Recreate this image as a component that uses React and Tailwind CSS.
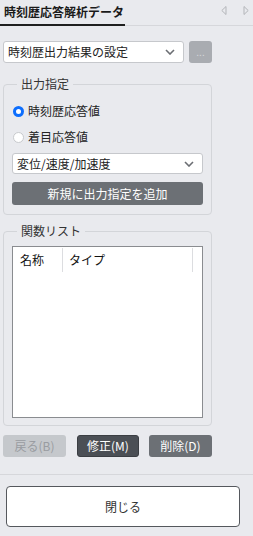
import { FiChevronDown } from 'react-icons/fi';

const font = { fontFamily: '"Noto Sans CJK JP", "Noto Sans", sans-serif' };

function Chevron() {
  return (
    <svg width="10" height="6" viewBox="0 0 10 6" className="text-[#6b6e73]">
      <path d="M1 1l4 4 4-4" fill="none" stroke="currentColor" strokeWidth="1.6" />
    </svg>
  );
}

function Select({ value, className }) {
  return (
    <div className={`flex items-center justify-between bg-white border border-[#c6c8cc] rounded-[3px] pl-[4px] pr-[8px] text-[12px] text-[#222] ${className}`}>
      <span className="leading-none">{value}</span>
      <Chevron />
    </div>
  );
}

function Radio({ checked, label }) {
  return (
    <div className="flex items-center h-[20px]">
      {checked ? (
        <span className="w-[11px] h-[11px] rounded-full bg-[#0d6efd] flex items-center justify-center ml-[1px]">
          <span className="w-[5px] h-[5px] rounded-full bg-white" />
        </span>
      ) : (
        <span className="w-[11px] h-[11px] rounded-full bg-white border border-[#c8cacd] ml-[1px]" />
      )}
      <span className="ml-[4px] text-[12px] text-[#222] leading-none">{label}</span>
    </div>
  );
}

export default function App() {
  return (
    <div className="w-[253px] h-[536px] bg-[#e9eaee] flex flex-col" style={font}>
      {/* Tab header */}
      <div className="flex items-start h-[26px] border-b border-[#d6d7db]">
        <div className="w-[125px] h-[26px] -mb-px border-b-[2px] border-[#1f1f1f] pl-[4px] pt-[5px] text-[12px] font-bold text-[#1a1a1a] leading-[14px]">
          時刻歴応答解析データ
        </div>
        <div className="flex-1" />
        <div className="flex items-center gap-[16px] pt-[6px] pr-[4px]">
          <svg width="6" height="9" viewBox="0 0 6 9">
            <path d="M5 0.5L0.8 4.5 5 8.5z" fill="none" stroke="#b3b5b9" strokeWidth="1" />
          </svg>
          <svg width="6" height="9" viewBox="0 0 6 9">
            <path d="M1 0.5L5.2 4.5 1 8.5z" fill="none" stroke="#b3b5b9" strokeWidth="1" />
          </svg>
        </div>
      </div>

      <div className="w-[212px] pl-[3px]">
        {/* Setting select */}
        <div className="flex items-center mt-[15px]">
          <Select value="時刻歴出力結果の設定" className="w-[181px] h-[22px]" />
          <div className="ml-[5px] w-[23px] h-[22px] rounded-[3px] bg-[#a9acb1] flex items-center justify-center text-[10px] text-[#d4d6d9] leading-none">
            ...
          </div>
        </div>

        {/* 出力指定 */}
        <fieldset className="mt-[14px] border border-[#d3d5d9] rounded-[4px] px-[8px] pb-[9px]">
          <legend className="ml-[5px] px-[4px] text-[12px] leading-[14px] text-[#333]">出力指定</legend>
          <div className="mt-[10px] flex flex-col gap-[6px]">
            <Radio checked label="時刻歴応答値" />
            <Radio label="着目応答値" />
          </div>
          <Select value="変位/速度/加速度" className="mt-[6px] h-[21px]" />
          <div className="mt-[8px] h-[23px] rounded-[3px] bg-[#6c7075] flex items-center justify-center text-[12px] text-white leading-none">
            新規に出力指定を追加
          </div>
        </fieldset>

        {/* 関数リスト */}
        <fieldset className="mt-[9px] border border-[#d3d5d9] rounded-[4px] px-[8px] pb-[7px]">
          <legend className="ml-[5px] px-[4px] text-[12px] leading-[14px] text-[#333]">関数リスト</legend>
          <div className="mt-[8px] h-[172px] bg-white border border-[#8a8c90]">
            <div className="flex h-[25px] pt-[1px]">
              <div className="w-[50px] border-r border-[#dcdde0] pl-[7px] text-[12px] text-[#111] leading-[24px]">名称</div>
              <div className="w-[130px] border-r border-[#dcdde0] pl-[6px] text-[12px] text-[#111] leading-[24px]">タイプ</div>
            </div>
          </div>
        </fieldset>

        {/* Action buttons */}
        <div className="flex items-center mt-[9px]">
          <div className="w-[63px] h-[22px] rounded-[3px] bg-[#c5c8cc] flex items-center justify-center text-[12px] text-[#999ca1] leading-none">
            戻る(B)
          </div>
          <div className="ml-[11px] w-[62px] h-[22px] rounded-[3px] bg-[#4b4f55] border border-[#3b3e43] flex items-center justify-center text-[12px] text-white leading-none">
            修正(M)
          </div>
          <div className="ml-[10px] w-[63px] h-[22px] rounded-[3px] bg-[#6c7075] flex items-center justify-center text-[12px] text-white leading-none">
            削除(D)
          </div>
        </div>
      </div>

      <div className="mt-[17px] border-t border-[#d6d7db]" />

      <div className="pl-[6px] mt-[11px]">
        <div className="w-[234px] h-[41px] bg-white border border-[#55585d] rounded-[4px] flex items-center justify-center text-[12px] text-[#333] leading-none">
          閉じる
        </div>
      </div>
    </div>
  );
}
